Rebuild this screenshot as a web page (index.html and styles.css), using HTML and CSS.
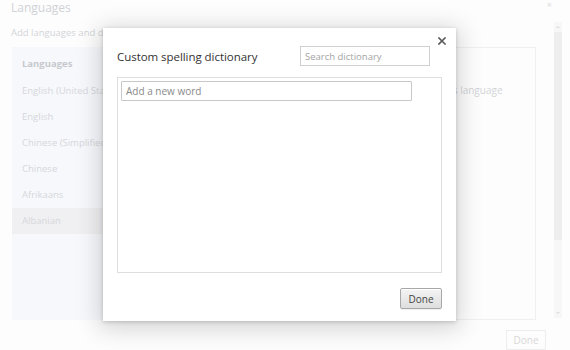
FILE: index.html
```html
<!DOCTYPE html>
<html>
<head>
<meta charset="utf-8">
<link rel="stylesheet" href="styles.css">
</head>
<body>
<div class="page">
  <div class="page-main">
    <div class="page-body">
      <div class="page-head">
        <h1 class="page-title">Languages</h1>
        <span class="page-close">×</span>
      </div>
      <p class="page-sub">Add languages and drag to order them based on your preference.</p>
      <div class="panes">
        <div class="lang-list">
          <div class="lang-head">Languages</div>
          <div class="lang-item">English (United States)</div>
          <div class="lang-item">English</div>
          <div class="lang-item">Chinese (Simplified Han)</div>
          <div class="lang-item">Chinese</div>
          <div class="lang-item">Afrikaans</div>
          <div class="lang-item selected">Albanian</div>
        </div>
        <div class="lang-detail">
          <div class="detail-text">Google Chrome is displayed in this language</div>
        </div>
      </div>
    </div>
    <div class="scrollbar">
      <span class="arrow up"></span>
      <div class="thumb"></div>
      <span class="arrow down"></span>
    </div>
  </div>
  <div class="page-foot">
    <button class="btn-faded">Done</button>
  </div>
</div>

<div class="dialog">
  <span class="dlg-close">
    <svg width="8" height="8" viewBox="0 0 8 8"><path d="M1 1 L7 7 M7 1 L1 7" stroke="#5a5a5a" stroke-width="1.6" stroke-linecap="square"/></svg>
  </span>
  <div class="dlg-head">
    <h2 class="dlg-title">Custom spelling dictionary</h2>
    <input class="dlg-search" type="text" placeholder="Search dictionary">
  </div>
  <div class="word-list">
    <input class="word-input" type="text" placeholder="Add a new word">
  </div>
  <div class="dlg-foot">
    <button class="btn">Done</button>
  </div>
</div>
</body>
</html>
```
FILE: styles.css
```css
* { box-sizing: border-box; }
html, body {
  margin: 0;
  padding: 0;
  width: 570px;
  height: 350px;
  overflow: hidden;
  background: #fdfdfd;
  font-family: "Open Sans", "Noto Sans", sans-serif;
}
.page {
  width: 562px;
  height: 350px;
  display: flex;
  flex-direction: column;
}
.page-main {
  display: flex;
  height: 327px;
}
.page-body {
  flex: 1;
  padding-left: 11px;
}
.page-head {
  display: flex;
  justify-content: space-between;
  align-items: flex-start;
  height: 22px;
  padding-top: 1px;
}
.page-title {
  margin: 0;
  font-size: 12px;
  font-weight: 400;
  color: #d0d2d6;
  line-height: 14px;
}
.page-close {
  color: #dcdcdc;
  font-size: 9px;
  line-height: 9px;
  margin-top: -1px;
  margin-right: 2px;
}
.page-sub {
  margin: 4px 0 0 0;
  font-size: 9.5px;
  color: #d3d5d9;
  line-height: 14px;
  white-space: nowrap;
}
.panes {
  display: flex;
  margin-top: 7px;
  margin-left: 1px;
  height: 273px;
  width: 524px;
}
.lang-list {
  width: 200px;
  background: #f7f8fb;
  padding-top: 7px;
}
.lang-head {
  font-size: 9.5px;
  font-weight: 700;
  color: #c6c8ce;
  height: 24px;
  line-height: 20px;
  padding-left: 10px;
}
.lang-item {
  font-size: 9.5px;
  color: #d5d7dc;
  height: 26px;
  line-height: 26px;
  padding-left: 10px;
  white-space: nowrap;
}
.lang-item.selected {
  background: #f0f0f2;
}
.lang-detail {
  flex: 1;
  border: 1px solid #f0f0f0;
  background: #fdfdfd;
  padding: 35px 0 0 10px;
}
.detail-text {
  font-size: 10px;
  color: #d2d4d8;
  white-space: nowrap;
  padding-left: 74px;
}
.scrollbar {
  width: 8px;
  margin-top: 22px;
  height: 296px;
  display: flex;
  flex-direction: column;
  align-items: center;
  background: #f7f7f7;
}
.arrow {
  width: 0;
  height: 0;
  border-left: 2px solid transparent;
  border-right: 2px solid transparent;
  margin: 4px 0;
}
.arrow.up { border-bottom: 2px solid #dedede; }
.arrow.down { border-top: 2px solid #dedede; margin-top: auto; }
.thumb {
  width: 8px;
  height: 208px;
  background: #eeeeee;
}
.page-foot {
  display: flex;
  justify-content: flex-end;
  padding-right: 16px;
  padding-top: 6px;
}
.btn-faded {
  width: 40px;
  height: 20px;
  background: #fdfdfd;
  border: 1px solid #ededed;
  color: #d8d8d8;
  font-family: "Open Sans", "Noto Sans", sans-serif;
  font-size: 10px;
  padding: 0;
}

.dialog {
  position: absolute;
  left: 103px;
  top: 28px;
  width: 353px;
  height: 293px;
  background: #fff;
  box-shadow: 0 4px 22px 4px rgba(0,0,0,0.16), 0 1px 4px rgba(0,0,0,0.18);
  padding: 18px 14px 12px 14px;
  display: flex;
  flex-direction: column;
}
.dlg-close {
  position: absolute;
  right: 10px;
  top: 9px;
  line-height: 0;
}
.dlg-head {
  display: flex;
  align-items: center;
  justify-content: space-between;
  height: 21px;
  padding-right: 12px;
}
.dlg-title {
  margin: 0;
  font-size: 11.5px;
  font-weight: 400;
  color: #333;
  letter-spacing: -0.05px;
}
.dlg-search {
  width: 130px;
  height: 20px;
  border: 1px solid #d0d0d0;
  font-family: "Open Sans", "Noto Sans", sans-serif;
  font-size: 9.5px;
  padding: 0 4px;
  color: #333;
  outline: none;
}
.dlg-search::placeholder {
  color: #a4a4a4;
}
.word-list {
  margin-top: 10px;
  height: 197px;
  border: 1px solid #dedede;
  padding: 3px 29px 0 3px;
}
.word-input {
  display: block;
  width: 100%;
  height: 20px;
  border: 1px solid #c8c8c8;
  border-radius: 1px;
  font-family: "Open Sans", "Noto Sans", sans-serif;
  font-size: 10px;
  padding: 0 4px;
  outline: none;
}
.word-input::placeholder { color: #8a8a8a; }
.dlg-foot {
  display: flex;
  justify-content: flex-end;
  margin-top: 15px;
}
.btn {
  width: 42px;
  height: 21px;
  border: 1px solid #a8a8a8;
  border-radius: 2px;
  background: linear-gradient(#f4f4f4, #dedede);
  box-shadow: 0 1px 0 rgba(0,0,0,0.06), inset 0 1px 0 #fff;
  font-family: "Open Sans", "Noto Sans", sans-serif;
  font-size: 10px;
  color: #444;
  padding: 0;
}
```
